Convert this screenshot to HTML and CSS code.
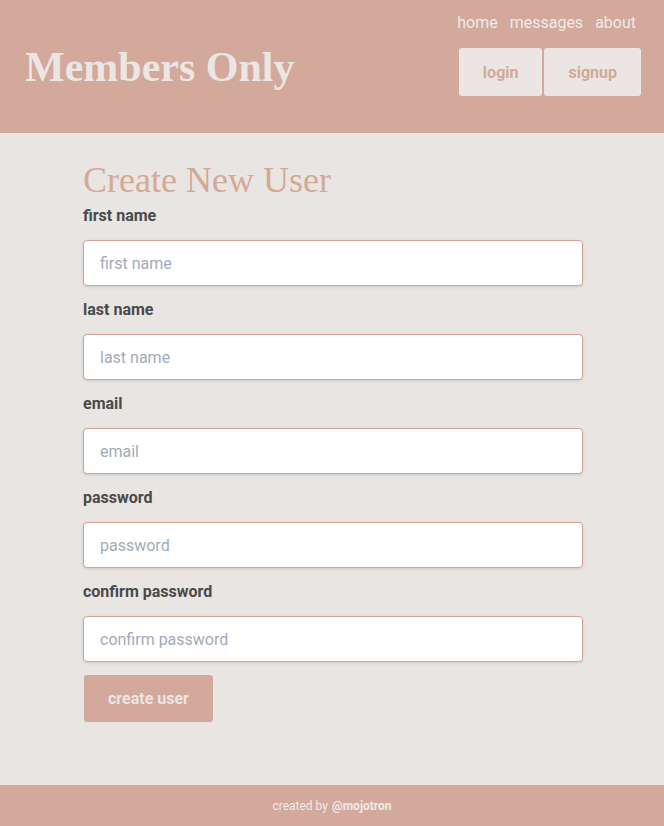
FILE: index.html
```html
<!DOCTYPE html>
<html>
<head>
<meta charset="utf-8">
<title>Members Only</title>
<link rel="stylesheet" href="styles.css">
</head>
<body>
<header class="site-header">
  <h1 class="brand">Members Only</h1>
  <div class="header-right">
    <nav class="nav">
      <a href="#">home</a>
      <a href="#">messages</a>
      <a href="#">about</a>
    </nav>
    <div class="auth">
      <a class="auth-btn" href="#">login</a>
      <a class="auth-btn" href="#">signup</a>
    </div>
  </div>
</header>
<main class="main">
  <form class="form">
    <h2 class="form-title">Create New User</h2>
    <label class="label" for="fn">first name</label>
    <input class="input" id="fn" type="text" placeholder="first name">
    <label class="label" for="ln">last name</label>
    <input class="input" id="ln" type="text" placeholder="last name">
    <label class="label" for="em">email</label>
    <input class="input" id="em" type="text" placeholder="email">
    <label class="label" for="pw">password</label>
    <input class="input" id="pw" type="password" placeholder="password">
    <label class="label" for="cpw">confirm password</label>
    <input class="input" id="cpw" type="password" placeholder="confirm password">
    <button class="submit" type="button">create user</button>
  </form>
</main>
<footer class="footer">created by <b>@mojotron</b></footer>
</body>
</html>
```
FILE: styles.css
```css
* { box-sizing: border-box; }
html, body { margin: 0; padding: 0; }
body {
  background: #e9e5e2;
  font-family: Roboto, "Liberation Sans", sans-serif;
  color: #4a4a4a;
}
.site-header {
  background: #d2a99a;
  height: 133px;
  display: flex;
  justify-content: space-between;
  padding: 11px 23px 0 25px;
}
.brand {
  margin: 32px 0 0 0;
  font-family: "Liberation Serif", serif;
  font-weight: bold;
  font-size: 42px;
  line-height: 48px;
  color: #ebe6e3;
}
.header-right {
  display: flex;
  flex-direction: column;
  align-items: flex-end;
}
.nav {
  display: flex;
  gap: 12px;
  padding-right: 5px;
  line-height: 24px;
  font-size: 16px;
}
.nav a {
  color: #efebe8;
  text-decoration: none;
}
.auth {
  display: flex;
  gap: 2px;
  margin-top: 13px;
}
.auth-btn {
  display: flex;
  align-items: center;
  height: 48px;
  padding: 0 24px;
  background: #ebe6e3;
  border-radius: 3px;
  color: #d2a99a;
  font-weight: bold;
  font-size: 16px;
  text-decoration: none;
}
.main {
  padding: 27px 0 63px 83px;
}
.form {
  width: 500px;
  display: flex;
  flex-direction: column;
  align-items: flex-start;
}
.form-title {
  margin: 0 0 4px 0;
  font-family: "Liberation Serif", serif;
  font-weight: normal;
  font-size: 36px;
  line-height: 40px;
  color: #d4a997;
}
.label {
  display: block;
  font-weight: bold;
  font-size: 16px;
  line-height: 24px;
  margin-bottom: 12px;
  color: #4a4a4a;
}
.input {
  width: 500px;
  height: 46px;
  border: 1px solid #d2a392;
  border-radius: 4px;
  background: #fff;
  box-shadow: 0 1px 3px rgba(0,0,0,0.12);
  padding: 0 16px;
  font-family: Roboto, "Liberation Sans", sans-serif;
  font-size: 16px;
  margin: 0 0 12px 0;
  color: #4a4a4a;
}
.input::placeholder { color: #a2aabb; }
.submit {
  margin: 1px 0 0 1px;
  width: 129px;
  height: 47px;
  border: none;
  border-radius: 3px;
  background: #d2a99a;
  color: #ebe6e3;
  font-family: Roboto, "Liberation Sans", sans-serif;
  font-weight: bold;
  font-size: 16px;
}
.footer {
  background: #d2a99a;
  height: 41px;
  display: flex;
  align-items: center;
  justify-content: center;
  font-size: 12px;
  color: #efebe8;
  gap: 4px;
}
.footer b { font-weight: bold; }
```
